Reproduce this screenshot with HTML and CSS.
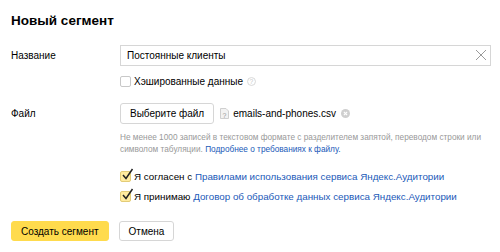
FILE: index.html
```
<!DOCTYPE html>
<html lang="ru">
<head>
<meta charset="UTF-8" />
<title>Новый сегмент</title>
<link rel="stylesheet" href="styles.css">
</head>
<body>

<div class="dialog">
  <h1>Новый сегмент</h1>

  <div class="row row-name">
    <label class="label" for="segName">Название</label>
    <div class="field">
      <div class="input">
        <input id="segName" type="text" value="Постоянные клиенты" />
        <svg class="clear" width="12" height="12" viewBox="0 0 12 12"><path d="M1 1L11 11M11 1L1 11" stroke="#9a9a9a" stroke-width="1" fill="none"/></svg>
      </div>
      <div class="check">
        <span class="box"></span>
        <span>Хэшированные данные</span>
        <svg class="hint" width="9" height="9" viewBox="0 0 10 10"><circle cx="5" cy="5" r="4.4" stroke="#d4d4d4" fill="none"/><text x="5" y="7.8" font-size="7.5" text-anchor="middle" fill="#c8c8c8" font-family="Liberation Sans, sans-serif">?</text></svg>
      </div>
    </div>
  </div>

  <div class="row row-file">
    <div class="label">Файл</div>
    <div class="field">
      <div class="file-line">
        <button class="btn">Выберите файл</button>
        <svg class="file-icon" width="9" height="11" viewBox="0 0 9 11"><path d="M0.5 0.5H6L8.5 3V10.5H0.5Z" fill="#f2f2f2" stroke="#cfcfcf"/><text x="4.5" y="9.5" font-size="7" text-anchor="middle" fill="#999" font-family="Liberation Sans, sans-serif">?</text></svg>
        <span class="file-name">emails-and-phones.csv</span>
        <svg class="file-remove" width="9" height="9" viewBox="0 0 10 10"><circle cx="5" cy="5" r="5" fill="#cfcfcf"/><path d="M3.2 3.2L6.8 6.8M6.8 3.2L3.2 6.8" stroke="#fff" stroke-width="1.3"/></svg>
      </div>
      <p class="help">Не менее 1000 записей в текстовом формате с разделителем запятой, переводом строки или<br>символом табуляции. <a href="#">Подробнее о требованиях к файлу.</a></p>
    </div>
  </div>

  <div class="row row-agree">
    <div class="label"></div>
    <div class="field">
      <div class="check checked">
        <span class="box"><svg width="13" height="13" viewBox="0 0 13 13"><path d="M2 7L5 10.5L11.5 1" stroke="#222" stroke-width="1.5" fill="none"/></svg></span>
        <span>Я согласен с <a href="#">Правилами использования сервиса Яндекс.Аудитории</a></span>
      </div>
      <div class="check checked">
        <span class="box"><svg width="13" height="13" viewBox="0 0 13 13"><path d="M2 7L5 10.5L11.5 1" stroke="#222" stroke-width="1.5" fill="none"/></svg></span>
        <span>Я принимаю <a href="#">Договор об обработке данных сервиса Яндекс.Аудитории</a></span>
      </div>
    </div>
  </div>

  <div class="actions">
    <button class="btn btn-action">Создать сегмент</button>
    <button class="btn">Отмена</button>
  </div>
</div>

</body>
</html>
```

FILE: styles.css
```
body {
  margin: 0;
  font-family: "Liberation Sans", Arial, sans-serif;
  font-size: 10px;
  color: #000;
  background: #fff;
}
.dialog {
  padding: 11px 9px 0 11px;
}
h1 {
  margin: 0;
  font-size: 13.5px;
  line-height: 20px;
  font-weight: bold;
}
.row {
  display: flex;
}
.label {
  width: 109px;
  flex: none;
}
.field {
  flex: 1;
  min-width: 0;
}
.row-name {
  margin-top: 14px;
}
.row-name .label {
  line-height: 21px;
}
.input {
  position: relative;
  height: 21px;
  border: 1px solid #d6d6d6;
  box-sizing: border-box;
}
.input input {
  border: none;
  outline: none;
  width: 100%;
  height: 19px;
  padding: 0 24px 0 6px;
  box-sizing: border-box;
  font: inherit;
  color: #000;
  background: transparent;
}
.clear {
  position: absolute;
  right: 3px;
  top: 3px;
}
.check {
  display: flex;
  align-items: center;
  height: 18px;
  margin-top: 6px;
}
.check .box {
  width: 11px;
  height: 11px;
  border: 1px solid #c8c8c8;
  border-radius: 2px;
  box-sizing: border-box;
  margin-right: 3px;
  position: relative;
  flex: none;
}
.check.checked .box {
  background: #ffeba0;
  border-color: #e3cc78;
}
.check.checked .box svg {
  position: absolute;
  left: 0;
  top: -4px;
}
.hint {
  margin-left: 4px;
}
.row-file {
  margin-top: 13px;
}
.row-file .label {
  line-height: 21px;
}
.file-line {
  display: flex;
  align-items: center;
}
.btn {
  height: 21px;
  padding: 0 9px;
  border: 1px solid #d6d6d6;
  border-radius: 3px;
  background: #fff;
  font: inherit;
  color: #000;
}
.file-icon {
  margin-left: 6px;
}
.file-name {
  margin-left: 4px;
}
.file-remove {
  margin-left: 5px;
}
.help {
  margin: 8px -9px 0 0;
  font-size: 8.25px;
  line-height: 12px;
  color: #999;
  white-space: nowrap;
}
a {
  color: #2159b8;
  text-decoration: none;
}
.row-agree {
  margin-top: 10px;
  font-size: 9.8px;
}
.row-agree .check {
  height: 20px;
  margin-top: 0;
}
.actions {
  display: flex;
  gap: 10px;
  margin-top: 15px;
}
.actions .btn {
  height: 20px;
}
.btn-action {
  background: #ffdb4d;
  border-color: #ffdb4d;
}
```
